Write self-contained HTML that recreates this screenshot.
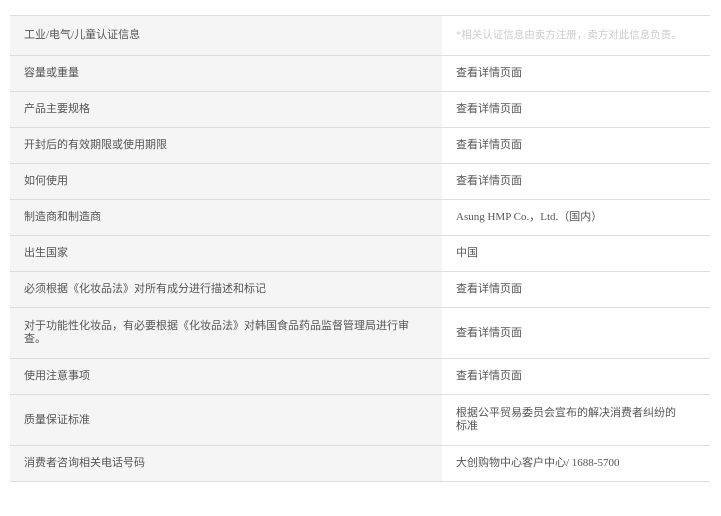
<!DOCTYPE html>
<html><head><meta charset="utf-8"><style>
body{margin:0;background:#fff;width:721px;height:516px;position:relative;font-family:"Liberation Serif","Noto Sans CJK SC",sans-serif;font-size:11px;color:#555;}
.r{position:absolute;left:10px;width:700px;border-bottom:1px solid #ddd;display:flex;}
.l{flex:none;box-sizing:border-box;width:432px;background:#f5f5f5;padding:0 14px;display:flex;align-items:center;line-height:13px;}
.v{flex:1;padding:0 14px;display:flex;align-items:center;line-height:13px;}
</style></head><body>
<div style="position:absolute;left:10px;top:15px;width:700px;border-top:1px solid #ddd"></div>
<div class="r" style="top:16px;height:39px"><div class="l">工业/电气/儿童认证信息</div><div class="v" style="color:#ccc;padding-right:0;white-space:nowrap;font-size:10.5px">*相关认证信息由卖方注册，卖方对此信息负责。</div></div>
<div class="r" style="top:56px;height:35px"><div class="l">容量或重量</div><div class="v">查看详情页面</div></div>
<div class="r" style="top:92px;height:35px"><div class="l">产品主要规格</div><div class="v">查看详情页面</div></div>
<div class="r" style="top:128px;height:35px"><div class="l">开封后的有效期限或使用期限</div><div class="v">查看详情页面</div></div>
<div class="r" style="top:164px;height:35px"><div class="l">如何使用</div><div class="v">查看详情页面</div></div>
<div class="r" style="top:200px;height:35px"><div class="l">制造商和制造商</div><div class="v">Asung HMP Co.，Ltd.（国内）</div></div>
<div class="r" style="top:236px;height:35px"><div class="l">出生国家</div><div class="v">中国</div></div>
<div class="r" style="top:272px;height:35px"><div class="l">必须根据《化妆品法》对所有成分进行描述和标记</div><div class="v">查看详情页面</div></div>
<div class="r" style="top:308px;height:50px"><div class="l" style="padding-right:30px">对于功能性化妆品，有必要根据《化妆品法》对韩国食品药品监督管理局进行审查。</div><div class="v">查看详情页面</div></div>
<div class="r" style="top:359px;height:35px"><div class="l">使用注意事项</div><div class="v">查看详情页面</div></div>
<div class="r" style="top:395px;height:50px"><div class="l">质量保证标准</div><div class="v" style="padding-right:30px">根据公平贸易委员会宣布的解决消费者纠纷的标准</div></div>
<div class="r" style="top:446px;height:35px"><div class="l">消费者咨询相关电话号码</div><div class="v">大创购物中心客户中心/ 1688-5700</div></div>
</body></html>
